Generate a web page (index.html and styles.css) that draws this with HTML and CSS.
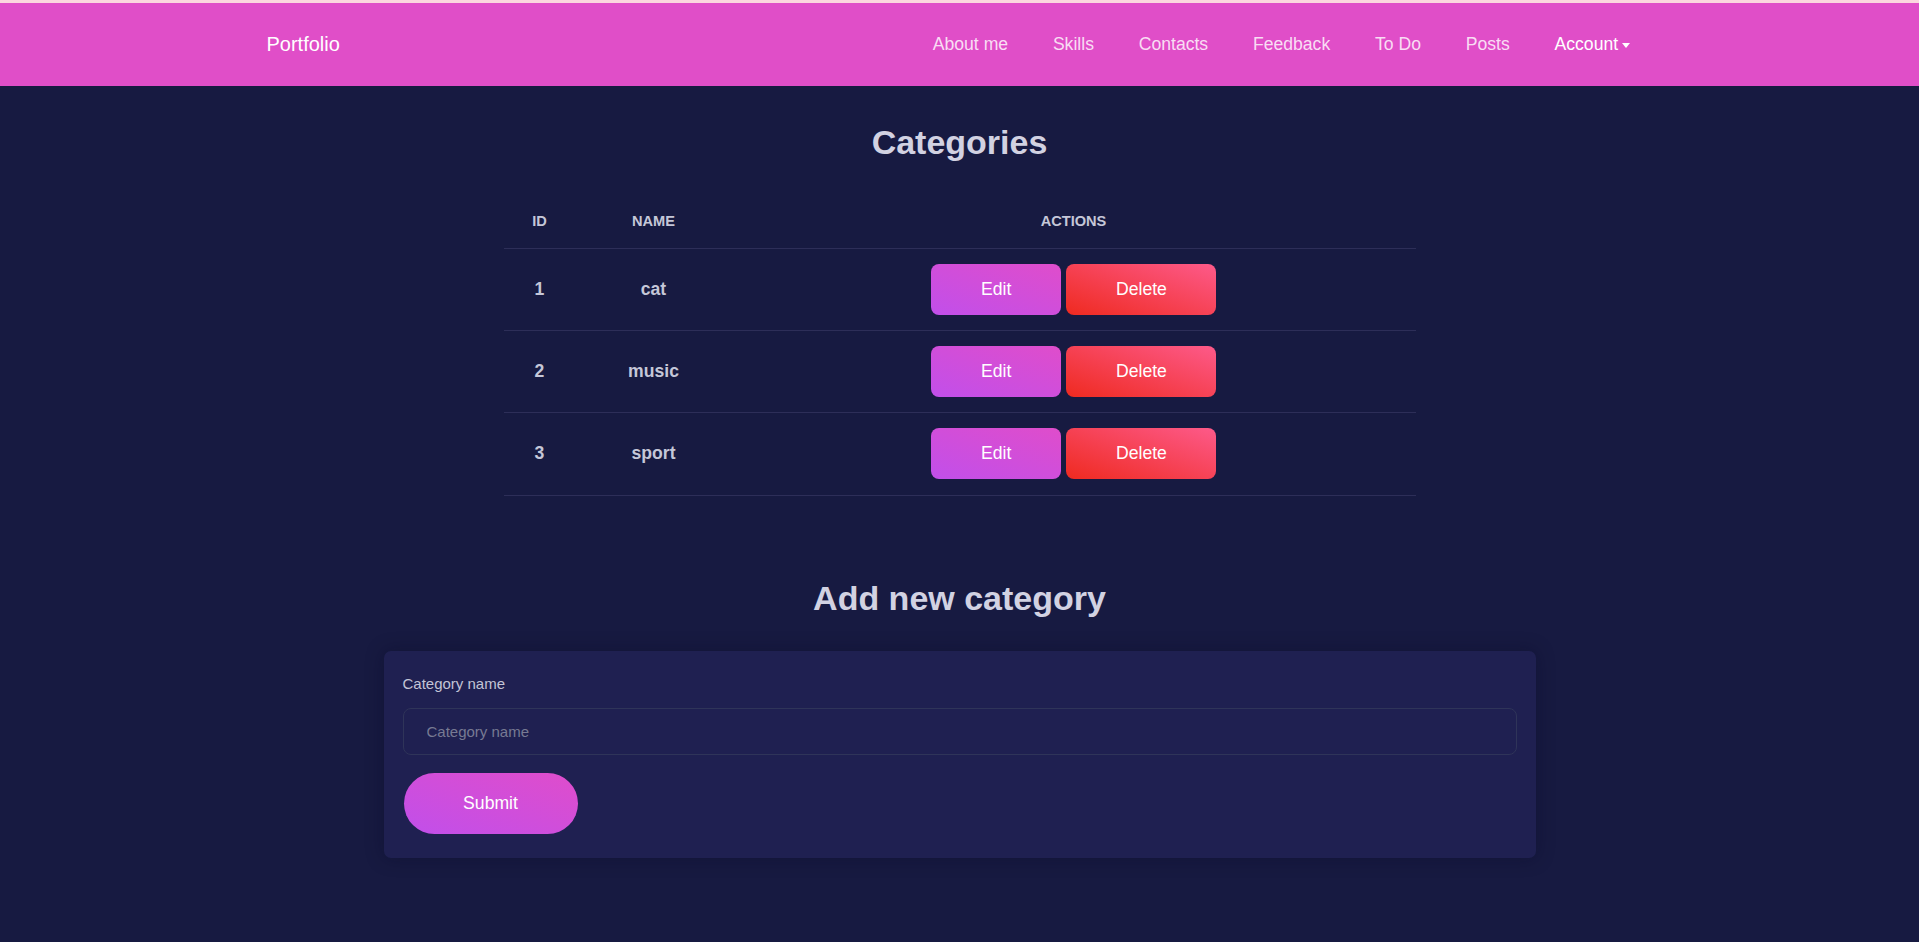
FILE: index.html
```html
<!DOCTYPE html>
<html lang="en">
<head>
<meta charset="utf-8">
<title>Categories</title>
<link rel="stylesheet" href="styles.css">
</head>
<body>
<header class="navbar">
  <div class="container nav-inner">
    <a class="brand" href="#">Portfolio</a>
    <nav class="nav-links">
      <a class="nav-link" href="#">About me</a>
      <a class="nav-link" href="#">Skills</a>
      <a class="nav-link" href="#">Contacts</a>
      <a class="nav-link" href="#">Feedback</a>
      <a class="nav-link" href="#">To Do</a>
      <a class="nav-link" href="#">Posts</a>
      <a class="nav-link active" href="#">Account<span class="caret"></span></a>
    </nav>
  </div>
</header>

<main class="main">
  <h2 class="title">Categories</h2>
  <table class="cat-table">
    <thead>
      <tr>
        <th class="col-id">ID</th>
        <th class="col-name">NAME</th>
        <th class="col-actions">ACTIONS</th>
      </tr>
    </thead>
    <tbody>
      <tr>
        <td>1</td>
        <td>cat</td>
        <td><div class="actions"><button class="btn btn-edit">Edit</button><button class="btn btn-delete">Delete</button></div></td>
      </tr>
      <tr>
        <td>2</td>
        <td>music</td>
        <td><div class="actions"><button class="btn btn-edit">Edit</button><button class="btn btn-delete">Delete</button></div></td>
      </tr>
      <tr>
        <td>3</td>
        <td>sport</td>
        <td><div class="actions"><button class="btn btn-edit">Edit</button><button class="btn btn-delete">Delete</button></div></td>
      </tr>
    </tbody>
  </table>

  <h2 class="title title-add">Add new category</h2>
  <form class="card">
    <label class="label" for="cat">Category name</label>
    <input class="input" id="cat" type="text" placeholder="Category name">
    <button class="btn-submit" type="button">Submit</button>
  </form>
</main>
</body>
</html>
```

FILE: styles.css
```css
* { box-sizing: border-box; }

html, body {
  margin: 0;
  padding: 0;
}

body {
  background: #171a41;
  font-family: "Liberation Sans", Arial, sans-serif;
  color: #c8c9d9;
  min-height: 942px;
}

.navbar {
  border-top: 3px solid #fcd6df;
  background: #e04ec8;
  height: 86px;
}

.container {
  max-width: 1410px;
  margin: 0 auto;
  padding: 0 12px;
}

.nav-inner {
  height: 83px;
  display: flex;
  align-items: center;
  justify-content: space-between;
}

.brand {
  color: #ffffff;
  font-size: 20px;
  text-decoration: none;
}

.nav-links {
  display: flex;
  align-items: center;
}

.nav-link {
  color: rgba(255, 255, 255, 0.82);
  font-size: 17.6px;
  text-decoration: none;
  padding: 0 22.4px;
  display: flex;
  align-items: center;
}

.nav-link.active {
  color: #ffffff;
}

.caret {
  display: inline-block;
  width: 0;
  height: 0;
  margin-left: 4px;
  margin-top: 2px;
  border-left: 4.5px solid transparent;
  border-right: 4.5px solid transparent;
  border-top: 5px solid #ffffff;
}

.main {
  display: flex;
  flex-direction: column;
  align-items: center;
}

.title {
  margin: 36px 0 0;
  font-size: 34px;
  line-height: 41px;
  font-weight: 700;
  color: #d2d2e2;
  text-align: center;
}

.cat-table {
  margin-top: 30px;
  width: 912px;
  border-collapse: collapse;
}

.cat-table th {
  font-size: 14.6px;
  font-weight: 700;
  color: #c5c7d8;
  height: 55px;
  padding: 1px 0 0;
  text-align: center;
  border-bottom: 1px solid #2d2e58;
}

.col-id { width: 72px; }
.col-name { width: 156px; }

.cat-table td {
  font-size: 17.6px;
  font-weight: 700;
  color: #c5c7d8;
  text-align: center;
  padding: 15.2px 0;
  border-bottom: 1px solid #2d2e58;
}

.actions {
  display: flex;
  justify-content: center;
  gap: 5px;
}

.btn {
  border: none;
  color: #ffffff;
  font-family: "Liberation Sans", Arial, sans-serif;
  font-size: 17.6px;
  height: 51px;
  padding: 0 50px;
  border-radius: 8px;
  cursor: pointer;
}

.btn-edit {
  width: 130px;
  background: linear-gradient(20deg, #c14fea 0%, #df4dcb 100%);
}

.btn-delete {
  width: 150px;
  background: linear-gradient(20deg, #ef2a20 0%, #fd5a8a 100%);
}

.title-add {
  margin-top: 82.5px;
}

.card {
  margin-top: 31.5px;
  width: 1152px;
  background: #1f2051;
  border-radius: 7px;
  padding: 24px 19px 24px 19px;
  display: flex;
  flex-direction: column;
  align-items: flex-start;
  box-shadow: 0 0 18px rgba(10, 10, 35, 0.35);
}

.label {
  font-size: 15px;
  line-height: 18px;
  color: #c3c4d6;
}

.input {
  margin-top: 15px;
  width: 100%;
  height: 47px;
  background: #1f2051;
  border: 1px solid #2f3459;
  border-radius: 8px;
  padding: 0 23px;
  font-family: "Liberation Sans", Arial, sans-serif;
  font-size: 15px;
  color: #c3c4d6;
  outline: none;
}

.input::placeholder {
  color: #777a93;
}

.btn-submit {
  margin-top: 18px;
  margin-left: 1px;
  width: 174px;
  height: 61px;
  border: none;
  border-radius: 31px;
  color: #ffffff;
  font-family: "Liberation Sans", Arial, sans-serif;
  font-size: 17.6px;
  background: linear-gradient(20deg, #c14fea 0%, #df4dcb 100%);
  cursor: pointer;
}
```
